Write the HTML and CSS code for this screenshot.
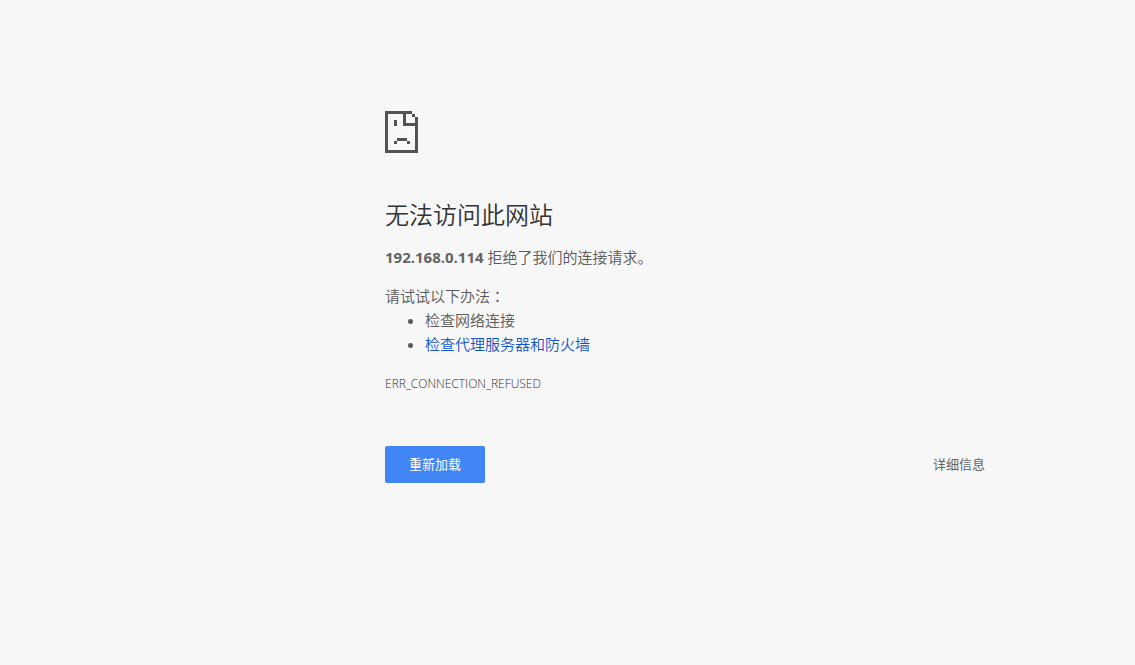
FILE: index.html
```html
<!DOCTYPE html>
<html lang="zh-CN">
<head>
  <meta charset="UTF-8" />
  <meta name="viewport" content="width=device-width, initial-scale=1.0"/>
  <title>192.168.0.114</title>
  <link rel="stylesheet" href="styles.css">
</head>
<body>
  <main class="interstitial">
    <svg class="icon" viewBox="0 0 33 42" shape-rendering="crispEdges" aria-hidden="true">
      <!-- page outline with folded corner -->
      <path d="M0 0h27v3h3v3h3v36H0zM3 3v36h27V15H18V3zM21 3v9h9V6h-3V3z" fill-rule="evenodd"/>
      <!-- eye and mouth -->
      <path d="M9 9h3v6H9zM12 27h10v3H12zM9 30h3v3H9zM22 30h3v3h-3z"/>
    </svg>

    <h1>无法访问此网站</h1>
    <p class="summary"><strong>192.168.0.114</strong> 拒绝了我们的连接请求。</p>

    <div class="suggestions">
      <p>请试试以下办法<span class="colon" lang="zh-TW">：</span></p>
      <ul>
        <li>检查网络连接</li>
        <li><a href="#proxy">检查代理服务器和防火墙</a></li>
      </ul>
    </div>

    <div class="error-code">ERR_CONNECTION_REFUSED</div>

    <div class="nav">
      <button type="button" class="reload" onclick="location.reload()">重新加载</button>
      <button type="button" class="details">详细信息</button>
    </div>
  </main>
</body>
</html>
```
FILE: styles.css
```css
* {
  box-sizing: border-box;
}

body {
  margin: 0;
  padding-left: 235px;
  background: #f7f7f7;
  color: #5a5a5a;
  font-family: 'Open Sans', 'Noto Sans CJK SC', sans-serif;
  font-size: 15px;
  font-weight: 350;
  line-height: 24px;
}

.interstitial {
  max-width: 600px;
  margin: 0 auto;
  padding-top: 111px;
}

.icon {
  display: block;
  width: 33px;
  height: 42px;
  fill: #535353;
}

h1 {
  margin: 48px 0 16px;
  color: #333;
  font-size: 24px;
  font-weight: 350;
  line-height: 28px;
}

p {
  margin: 0;
}

.summary {
  margin-bottom: 15px;
}

.summary strong {
  color: #646464;
}

.colon {
  font-family: 'Noto Sans CJK TC', sans-serif;
}

ul {
  margin: 0;
  padding-left: 40px;
}

a {
  color: #1155cc;
  text-decoration: none;
}

.error-code {
  margin-top: 16px;
  color: #333;
  font-size: 12px;
}

.nav {
  display: flex;
  justify-content: space-between;
  align-items: center;
  margin-top: 50px;
}

button {
  border: none;
  font-family: inherit;
  font-size: 13px;
  line-height: 17px;
  cursor: pointer;
}

.reload {
  padding: 10px 24px;
  border-radius: 2px;
  background: #4285f4;
  color: #fff;
}

.details {
  padding: 10px 0;
  background: none;
  color: #646464;
}

@media (max-width: 900px) {
  body {
    padding: 0 24px;
  }
}
```
